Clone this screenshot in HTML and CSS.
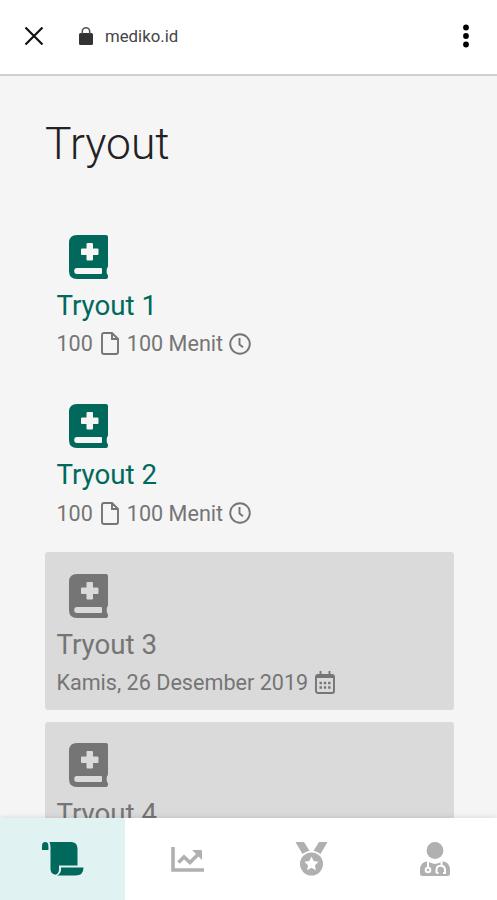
FILE: index.html
```
<!DOCTYPE html>
<html lang="id">

<head>
  <meta charset="UTF-8">
  <meta name="viewport" content="width=device-width, initial-scale=1">
  <title>Mediko</title>
  <link rel="stylesheet" href="styles.css">
</head>

<body>
  <!-- icons used more than once -->
  <svg class="symbols">
    <symbol id="book" viewBox="0 0 39 44">
      <path fill-rule="evenodd" d="M8 0H37Q39 0 39 2V31Q39 32.500 38 33.300Q37.300 36 38 39Q39 39.700 39 41V42Q39 44 37 44H8Q0 44 0 36V8Q0 0 8 0ZM18.500 8Q17.500 8 17.500 9V13.500H13Q12 13.500 12 14.500V19Q12 20 13 20H17.500V24.500Q17.500 25.500 18.500 25.500H23Q24 25.500 24 24.500V20H28.500Q29.500 20 29.500 19V14.500Q29.500 13.500 28.500 13.500H24V9Q24 8 23 8ZM8 33Q5.200 33 5.200 36T8 39H32Q33 39 33 38V34Q33 33 32 33Z" />
    </symbol>
    <symbol id="file" viewBox="0 0 18 23">
      <path d="M3 1H11L17 7V20Q17 22 15 22H3Q1 22 1 20V3Q1 1 3 1ZM11 1V7H17" />
    </symbol>
    <symbol id="clock" viewBox="0 0 22 22">
      <circle cx="11" cy="11" r="9.800" />
      <path d="M10.500 5V11.500L14 14.200" />
    </symbol>
  </svg>

  <header class="browser-bar">
    <svg class="close-icon" viewBox="0 0 20 20">
      <path d="M1.500 1.500L18.500 18.500M18.500 1.500L1.500 18.500" />
    </svg>
    <svg class="lock-icon" viewBox="0 0 14 18">
      <rect y="6" width="14" height="12" rx="1.500" />
      <path d="M3.300 7V4.500a3.700 3.700 0 0 1 7.400 0V7" />
    </svg>
    <span class="url">mediko.id</span>
    <svg class="more-icon" viewBox="0 0 6 24">
      <circle cx="3" cy="3.500" r="2.900" />
      <circle cx="3" cy="12" r="2.900" />
      <circle cx="3" cy="20.500" r="2.900" />
    </svg>
  </header>

  <main class="content">
    <h1>Tryout</h1>

    <div class="card">
      <svg class="book-icon"><use href="#book" /></svg>
      <h2>Tryout 1</h2>
      <div class="info">
        <span>100</span>
        <svg class="file-icon"><use href="#file" /></svg>
        <span>100 Menit</span>
        <svg class="clock-icon"><use href="#clock" /></svg>
      </div>
    </div>

    <div class="card">
      <svg class="book-icon"><use href="#book" /></svg>
      <h2>Tryout 2</h2>
      <div class="info">
        <span>100</span>
        <svg class="file-icon"><use href="#file" /></svg>
        <span>100 Menit</span>
        <svg class="clock-icon"><use href="#clock" /></svg>
      </div>
    </div>

    <div class="card disabled">
      <svg class="book-icon"><use href="#book" /></svg>
      <h2>Tryout 3</h2>
      <div class="info">
        <span>Kamis, 26 Desember 2019</span>
        <svg class="calendar-icon" viewBox="0 0 20 23">
          <rect x="1" y="4" width="18" height="18" rx="2" />
          <path d="M1 6H19M5.500 0V4M14.500 0V4" />
          <path class="dots" d="M4.500 12H15.500M4.500 16.500H15.500" />
        </svg>
      </div>
    </div>

    <div class="card disabled">
      <svg class="book-icon"><use href="#book" /></svg>
      <h2>Tryout 4</h2>
    </div>
  </main>

  <nav class="bottom-nav">
    <a class="nav-item active">
      <svg class="scroll-icon" viewBox="0 0 42 34">
        <path d="M0 8V4Q0 0 3.200 0T6.400 4V8Z" />
        <path d="M7.500 0H29Q35.500 0 35.500 7V23.500H17V27.500Q17 31.500 13.500 32.700Q8.500 32 8.500 27V5Q8.500 2 7.500 0Z" />
        <path d="M19 25.500H41.500Q41.500 33.500 33.500 33.500H15Q19 31.500 19 27.500Z" />
      </svg>
    </a>
    <a class="nav-item">
      <svg class="chart-icon" viewBox="0 0 33 25">
        <path class="line" d="M2 0V23H33M7.500 15.500L13 10L19 15.500L28 6.500" />
        <path d="M21 3H30Q31 3 31 4V13Z" />
      </svg>
    </a>
    <a class="nav-item">
      <svg class="medal-icon" viewBox="0 0 33 34">
        <path d="M0.500 0H9L14.500 8.800Q10.500 9.500 7.500 12ZM32.500 0H24L18.500 8.800Q22.500 9.500 25.500 12Z" />
        <path fill-rule="evenodd" d="M16.500 10.500A11.500 11.500 0 1 1 16.500 33.500A11.500 11.500 0 1 1 16.500 10.500ZM16.500 14.500L14.300 19L9.500 19.700L13 23.200L12.200 28.200L16.500 25.800L20.800 28.200L20 23.200L23.500 19.700L18.700 19Z" />
      </svg>
    </a>
    <a class="nav-item">
      <svg class="doctor-icon" viewBox="0 0 30 34">
        <circle cx="15" cy="8.500" r="8.400" />
        <path d="M8 19.200Q11.500 22 15 22T22 19.200Q30 20 30 28V31.500Q30 34 27.500 34H2.500Q0 34 0 31.500V28Q0 20 8 19.200Z" />
        <path class="tube" d="M8 19V25.500M21.500 19V23.500M16.500 31V28Q16.500 23.700 20.700 23.700T25 28V31H23M16.500 31H18.500" />
        <circle class="tube" cx="8" cy="28" r="2.300" />
      </svg>
    </a>
  </nav>
</body>

</html>
```

FILE: styles.css
```
* {
  box-sizing: border-box;
}

body {
  margin: 0;
  height: 900px;
  display: flex;
  flex-direction: column;
  overflow: hidden;
  font-family: Roboto, 'Liberation Sans', sans-serif;
  background-color: #f5f5f5;
  color: #222;
}

svg {
  display: block;
  flex: none;
  fill: currentColor;
}

.symbols {
  display: none;
}

/* browser bar */
.browser-bar {
  flex: none;
  height: 76px;
  padding: 0 28px 2px 24px;
  display: flex;
  align-items: center;
  background-color: #fff;
  border-bottom: 2px solid #cfcfcf;
}

.close-icon {
  width: 20px;
  height: 20px;
  stroke: #111;
  stroke-width: 2.2;
}

.lock-icon {
  width: 14px;
  height: 18px;
  margin-left: 35px;
  color: #333;
}

.lock-icon path {
  fill: none;
  stroke: #555;
  stroke-width: 1.6;
}

.url {
  margin-left: 12px;
  font-size: 16.8px;
  color: #444;
}

.more-icon {
  width: 6px;
  height: 24px;
  margin-left: auto;
  color: #000;
}

/* tryout list */
.content {
  flex: 1;
  min-height: 0;
  padding: 38px 43px 0 45px;
  overflow: hidden;
}

h1 {
  margin: 0 0 39.4px;
  height: 60px;
  line-height: 60px;
  font-size: 44.4px;
  font-weight: 300;
}

.card {
  height: 158px;
  margin-bottom: 11.4px;
  padding: 21.500px 11.4px 0;
  border-radius: 3px;
  color: #00695c;
}

.book-icon {
  width: 39px;
  height: 44px;
  margin-left: 13px;
}

h2 {
  margin: 9px 0 0;
  height: 36px;
  line-height: 36px;
  font-size: 27.7px;
  font-weight: 400;
}

.info {
  display: flex;
  align-items: center;
  height: 26px;
  margin-top: 7px;
  font-size: 21.6px;
  color: #757575;
}

.info svg {
  fill: none;
  stroke: currentColor;
  stroke-width: 1.9;
}

.file-icon {
  width: 18px;
  height: 23px;
  margin: 0 8px;
}

.clock-icon {
  width: 22px;
  height: 22px;
  margin-left: 6px;
}

.calendar-icon {
  width: 20px;
  height: 23px;
  margin-left: 7px;
}

.calendar-icon .dots {
  stroke-width: 2.4;
  stroke-dasharray: 2.400 1.900;
}

.card.disabled {
  background-color: #dadada;
  color: #757575;
}

/* bottom navigation */
.bottom-nav {
  position: relative;
  flex: none;
  display: flex;
  height: 82px;
  background-color: #fff;
  box-shadow: 0 -1px 5px rgba(0, 0, 0, 0.1);
}

.nav-item {
  flex: 1;
  display: flex;
  align-items: center;
  justify-content: center;
  color: #b0b0b0;
}

.nav-item.active {
  flex: 0 0 125px;
  background-color: #e0f2f1;
  color: #00695c;
}

.scroll-icon {
  width: 42px;
  height: 34px;
}

.chart-icon {
  width: 33px;
  height: 25px;
}

.chart-icon .line {
  fill: none;
  stroke: currentColor;
  stroke-width: 3.6;
}

.medal-icon {
  width: 33px;
  height: 34px;
}

.doctor-icon {
  width: 30px;
  height: 34px;
}

.doctor-icon .tube {
  fill: none;
  stroke: #fff;
  stroke-width: 2;
}
```
